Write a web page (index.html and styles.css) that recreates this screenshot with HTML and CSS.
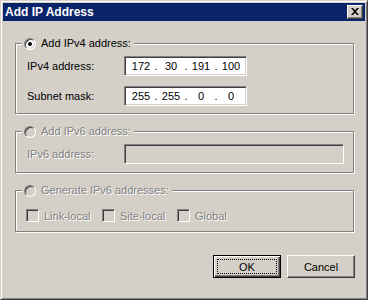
FILE: index.html
```html
<!DOCTYPE html>
<html><head>
<meta charset="utf-8">
<link rel="stylesheet" href="styles.css">
</head>
<body>

<div class="window">
  <div class="titlebar">
    <span class="title">Add IP Address</span>
    <span class="close">
      <svg width="8" height="7" viewBox="0 0 8 7"><path d="M0 0h2l2 2.3L6 0h2L5 3.5 8 7H6L4 4.7 2 7H0l3-3.5z"/></svg>
    </span>
  </div>

  <div class="content">
    <!-- IPv4 -->
    <fieldset class="group">
      <legend><span class="radio checked"></span>Add IPv4 address:</legend>
      <div class="rows">
        <div class="row">
          <span class="label">IPv4 address:</span>
          <div class="edit ip">
            <span class="octet">172</span><span class="dot">.</span>
            <span class="octet">30</span><span class="dot">.</span>
            <span class="octet">191</span><span class="dot">.</span>
            <span class="octet">100</span>
          </div>
        </div>
        <div class="row">
          <span class="label">Subnet mask:</span>
          <div class="edit ip">
            <span class="octet">255</span><span class="dot">.</span>
            <span class="octet">255</span><span class="dot">.</span>
            <span class="octet">0</span><span class="dot">.</span>
            <span class="octet">0</span>
          </div>
        </div>
      </div>
    </fieldset>

    <!-- IPv6 -->
    <fieldset class="group disabled">
      <legend><span class="radio"></span>Add IPv6 address:</legend>
      <div class="rows">
        <div class="row">
          <span class="label">IPv6 address:</span>
          <div class="edit wide"></div>
        </div>
      </div>
    </fieldset>

    <!-- generated -->
    <fieldset class="group disabled">
      <legend><span class="radio"></span>Generate IPv6 addresses:</legend>
      <div class="checks">
        <span class="check"><span class="box"></span>Link-local</span>
        <span class="check"><span class="box"></span>Site-local</span>
        <span class="check"><span class="box"></span>Global</span>
      </div>
    </fieldset>

    <div class="buttons">
      <button class="btn default"><span class="focus">OK</span></button>
      <button class="btn">Cancel</button>
    </div>
  </div>
</div>

</body>
</html>
```

FILE: styles.css
```css
/* classic window chrome */
body {
  margin: 0;
  font-family: "Liberation Sans", Arial, sans-serif;
  font-size: 11px;
  color: #000;
}

.window {
  width: 368px;
  height: 300px;
  box-sizing: border-box;
  background: #d4d0c8;
  border: 1px solid;
  border-color: #d4d0c8 #404040 #404040 #d4d0c8;
  box-shadow: inset 1px 1px #fff, inset -1px -1px #808080;
  padding: 2px;
  display: flex;
  flex-direction: column;
}

.titlebar {
  height: 18px;
  background: #0a246a;
  display: flex;
  align-items: center;
  justify-content: space-between;
  padding: 0 2px 0 2px;
}

.title {
  color: #fff;
  font-weight: bold;
  font-size: 12px;
}

.close {
  width: 16px;
  height: 14px;
  box-sizing: border-box;
  background: #d4d0c8;
  border: 1px solid;
  border-color: #fff #404040 #404040 #fff;
  box-shadow: inset -1px -1px #808080;
  display: flex;
  align-items: center;
  justify-content: center;
}
.close svg { display: block; margin: 0 1px 1px 0; }

.content {
  flex: 1;
  display: flex;
  flex-direction: column;
  padding: 16px 11px 0 12px;
}

/* group boxes */
.group {
  margin: 0 0 11px 0;
  padding: 0;
  border: 1px solid #808080;
  box-shadow: 1px 1px #fff, inset 1px 1px #fff;
  min-width: 0;
}

.group legend {
  margin-left: 6px;
  padding: 0 3px 0 2px;
  height: 13px;
  line-height: 13px;
  background: #d4d0c8;
  display: flex;
  align-items: center;
}

.disabled legend,
.disabled .label,
.disabled .check {
  color: #808080;
  text-shadow: 1px 1px #fff;
}

.rows {
  padding: 6px 0 7px 11px;
  display: flex;
  flex-direction: column;
  gap: 10px;
}
.disabled .rows { padding-bottom: 8px; }

.row {
  display: flex;
  align-items: center;
}

.label {
  width: 97px;
}

/* sunken controls */
.edit,
.radio,
.box {
  box-sizing: border-box;
  border: 1px solid;
  border-color: #808080 #fff #fff #808080;
  box-shadow: inset 1px 1px #404040, inset -1px -1px #d4d0c8;
  background: #fff;
}

.edit {
  height: 20px;
}
.disabled .edit { background: #d4d0c8; }

.ip {
  width: 123px;
  display: flex;
  align-items: center;
  padding-left: 4px;
}
.octet {
  width: 24px;
  text-align: center;
}
.dot {
  width: 6px;
  text-align: center;
}

.wide {
  width: 220px;
}

.radio {
  width: 12px;
  height: 12px;
  border-radius: 50%;
  margin-right: 5px;
  display: flex;
  align-items: center;
  justify-content: center;
}
.disabled .radio { background: #d4d0c8; }
.radio.checked::after {
  content: '';
  width: 4px;
  height: 4px;
  border-radius: 50%;
  background: #000;
}

.checks {
  display: grid;
  grid-template-columns: 76px 75px auto;
  padding: 12px 0 9px 10px;
}
.check {
  display: flex;
  align-items: center;
}
.box {
  width: 13px;
  height: 13px;
  margin-right: 5px;
  background: #d4d0c8;
}

/* push buttons */
.buttons {
  display: flex;
  justify-content: flex-end;
  gap: 6px;
  margin-top: 12px;
  margin-right: -1px;
}

.btn {
  width: 68px;
  height: 23px;
  box-sizing: border-box;
  font-family: "Liberation Sans", Arial, sans-serif;
  font-size: 11px;
  color: #000;
  background: #d4d0c8;
  border: 1px solid;
  border-color: #fff #404040 #404040 #fff;
  box-shadow: inset -1px -1px #808080;
  padding: 0;
  display: flex;
  align-items: center;
  justify-content: center;
}

.btn.default {
  border: 1px solid #000;
  box-shadow: inset 1px 1px #fff, inset -1px -1px #404040, inset -2px -2px #808080;
  padding: 3px;
}
.focus {
  flex: 1;
  align-self: stretch;
  border: 1px dotted #000;
  display: flex;
  align-items: center;
  justify-content: center;
}
```
